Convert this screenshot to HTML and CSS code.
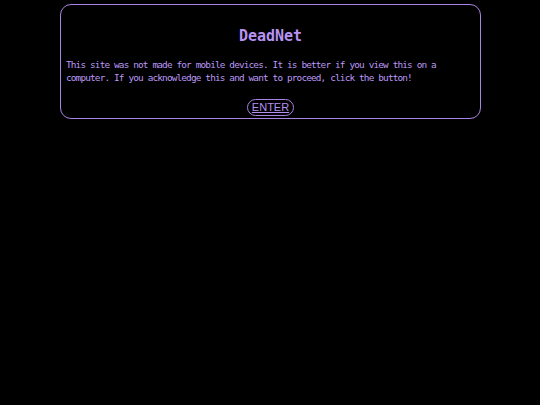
FILE: index.html
```html
<!DOCTYPE html>
<html>
<head>
<meta charset="utf-8">
<title>DeadNet</title>
<link rel="stylesheet" href="styles.css">
</head>
<body>
<div class="box">
  <h1 class="title">DeadNet</h1>
  <p class="msg">This site was not made for mobile devices. It is better if you view this on a computer. If you acknowledge this and want to proceed, click the button!</p>
  <div class="actions"><a class="enter" href="#">ENTER</a></div>
</div>
</body>
</html>
```
FILE: styles.css
```css
html, body {
  background: #000;
}
body {
  margin: 0;
  color: #b590f0;
  font-family: "DejaVu Sans Mono", "Liberation Mono", monospace;
}
.box {
  width: 421px;
  box-sizing: border-box;
  margin: 4px 0 0 60px;
  border: 1.5px solid #a983e2;
  border-radius: 11px;
  padding: 0 5px 2px;
}
.title {
  margin: 22px 0 0;
  font-size: 15px;
  line-height: 18px;
  font-weight: bold;
  text-align: center;
  color: #b893f2;
}
.msg {
  margin: 14px 0 0;
  font-size: 9.4px;
  line-height: 12.5px;
  letter-spacing: -0.84px;
  color: #bc98f4;
}
.actions {
  margin-top: 12px;
  text-align: center;
}
.enter {
  display: inline-block;
  border: 1px solid #a983e2;
  border-radius: 9px;
  padding: 0 3.5px;
  font-family: "Liberation Sans", Arial, sans-serif;
  font-size: 11px;
  line-height: 15px;
  color: #b590f0;
  text-decoration: underline;
}
```
